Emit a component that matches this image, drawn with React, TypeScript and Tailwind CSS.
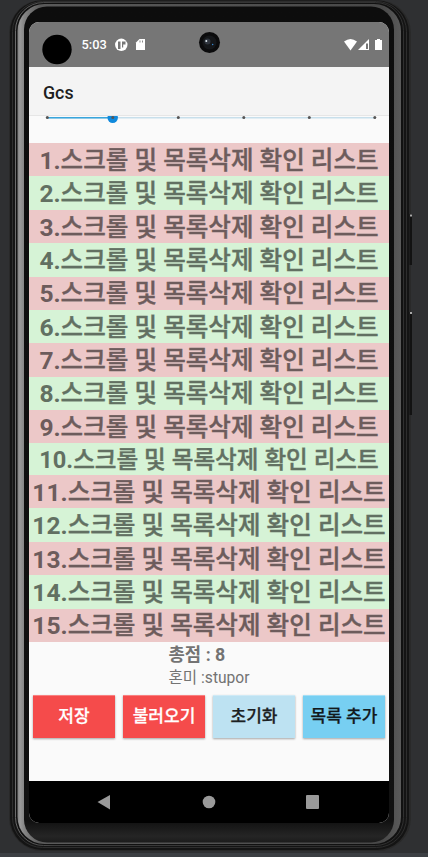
import React from "react";

const rows = Array.from({ length: 15 }, (_, i) => i + 1);
const ticks = [47, 112.5, 178, 243.5, 309, 374.5];

const buttons = [
  { label: "저장", style: "bg-[#f54b4b] text-white border-t-[#f98080]" },
  { label: "불러오기", style: "bg-[#f54b4b] text-white border-t-[#f98080]" },
  { label: "초기화", style: "bg-[#bde2f2] text-[#1c2123] border-t-[#cfeaf6]" },
  { label: "목록 추가", style: "bg-[#77cff2] text-[#12191c] border-t-[#a4dff6]" },
];

const PhoneFrame: React.FC = () => (
  <svg className="absolute inset-0" width="428" height="857" viewBox="0 0 428 857">
    <defs>
      <linearGradient id="metal" x1="17" x2="401" y1="0" y2="0" gradientUnits="userSpaceOnUse">
        <stop offset="0" stopColor="#7a7a7a" />
        <stop offset="0.008" stopColor="#9a9a9a" />
        <stop offset="0.018" stopColor="#868686" />
        <stop offset="0.06" stopColor="#5a5a5a" />
        <stop offset="0.95" stopColor="#484848" />
        <stop offset="1" stopColor="#5a5a5a" />
      </linearGradient>
      <linearGradient id="rim" x1="15" x2="405" y1="0" y2="0" gradientUnits="userSpaceOnUse">
        <stop offset="0" stopColor="#6a6a6a" />
        <stop offset="0.1" stopColor="#3c3c3c" />
        <stop offset="1" stopColor="#303030" />
      </linearGradient>
      <linearGradient id="bezel" x1="0" x2="0" y1="7" y2="842" gradientUnits="userSpaceOnUse">
        <stop offset="0" stopColor="#0d0d0d" />
        <stop offset="0.975" stopColor="#111" />
        <stop offset="0.993" stopColor="#252525" />
        <stop offset="1" stopColor="#1c1c1c" />
      </linearGradient>
    </defs>
    <rect y="853" width="428" height="4" fill="#3c3f43" />
    <rect x="9" y="108" width="5" height="8" fill="#3a3a3a" />
    <rect x="9" y="0" width="402" height="851" rx="33" fill="#292929" />
    <rect x="10" y="0.5" width="399" height="849.500" rx="32" fill="#141414" />
    <rect x="12.500" y="1.500" width="394" height="846" rx="30" fill="none" stroke="#2e2e2e" />
    <rect x="15.500" y="2.500" width="388" height="843" rx="28" fill="#111" stroke="url(#rim)" />
    <rect x="17.500" y="4" width="383.500" height="840" rx="27" fill="url(#metal)" />
    <rect x="24" y="6.500" width="370" height="836" rx="23" fill="url(#bezel)" />
    <path d="M409.500 214h2.500v51h-2.500zM409.500 312h2.500v103h-2.500z" fill="#121212" />
    <path d="M410 214.500h2v2h-2zM410 312h2v2h-2z" fill="#aaa" />
  </svg>
);

const StatusBar: React.FC = () => (
  <div className="relative h-[45px] shrink-0 bg-[#767676]">
    <svg className="absolute inset-0" width="360" height="45" viewBox="29 22 360 45">
      <circle cx="57" cy="49.5" r="14.7" fill="#000" />
      <circle cx="121.300" cy="44.800" r="6.200" fill="#fff" />
      <path d="M118 41.500h2.500v7.500h-2.500z" fill="#767676" />
      <path d="M122 41.500h3.500v3h-2.300v3h-1.200z" fill="#767676" />
      <path d="M139.500 39h5.500v11h-9v-7.500z" fill="#fff" />
      <path d="M139.500 40.500h1v2h-1zM142 40.500h1v2h-1z" fill="#888" />
      <circle cx="209.500" cy="42.500" r="10.500" fill="#0b0b0c" />
      <circle cx="209.500" cy="42.500" r="7" fill="#15171a" />
      <circle cx="207.500" cy="41.500" r="3" fill="#30353e" />
      <circle cx="206.300" cy="41" r="1" fill="#dce8ee" />
      <circle cx="212.700" cy="44.500" r="0.700" fill="#3a91e0" />
      <path d="M344 41.500q6.500-5 13 0l-6.500 9z" fill="#fff" />
      <path d="M358 50L369 39v11z" fill="#fff" />
      <path d="M366 43.500h2V49h-2z" fill="#767676" />
      <path d="M377 39h3v1h2v10h-7V40h2z" fill="#fff" />
    </svg>
    <span className="absolute left-[52.5px] top-[15px] text-[12.8px] leading-4 font-medium text-white">
      5:03
    </span>
  </div>
);

const App: React.FC = () => {
  return (
    <div className="relative h-[857px] w-[428px] overflow-hidden bg-[#2f3032] pl-[29px] pt-[22px] font-[Roboto,'Noto_Sans_CJK_KR',sans-serif]">
      <PhoneFrame />
      <div className="relative flex h-[801px] w-[360px] flex-col overflow-hidden rounded-[10px] bg-[#fafafa]">
        <StatusBar />
        <header className="flex h-[49px] shrink-0 items-center border-b border-[#e6e6e6] bg-[#f4f4f4] pl-[14px] pt-[4px] text-[17.8px] font-medium text-[#202020]">
          Gcs
        </header>
        <div className="h-[27px] shrink-0">
          <svg width="360" height="27" viewBox="29 116 360 27">
            <rect x="47" y="117" width="328" height="1.500" fill="#c8dfeb" />
            <rect x="47" y="117" width="65" height="1.500" fill="#39a5dc" />
            <circle cx="112.700" cy="117.700" r="5.200" fill="#1089dc" />
            {ticks.map((x) => (
              <circle key={x} cx={x + 0.3} cy="117.500" r="1.500" fill="#555" />
            ))}
          </svg>
        </div>
        <ul className="shrink-0">
          {rows.map((n) => (
            <li
              key={n}
              className={`flex items-center justify-center whitespace-pre pt-[3px] font-medium odd:bg-[#ecc8c8] odd:text-[#6d5c5c] even:bg-[#d6f3d6] even:text-[#627062] ${
                n === 10 ? "h-[31.7px] text-[23.6px]" : "h-[33.38px] text-[24.55px]"
              }`}
            >
              <b className="font-bold">{n}.</b>
              <span className="[-webkit-text-stroke:0.4px]">스크롤 및 목록삭제 확인 리스트</span>
            </li>
          ))}
        </ul>
        <div className="ml-[139.5px] shrink-0 text-[#737373]">
          <p className="h-6 pt-px text-[17.8px] leading-6 font-bold">총점 : 8</p>
          <p className="h-[23px] pt-px text-[15.6px] leading-[22px]">혼미 :stupor</p>
        </div>
        <div className="mt-[6px] flex shrink-0 gap-2 px-1">
          {buttons.map((b) => (
            <button
              key={b.label}
              className={`h-[43px] w-[82px] whitespace-nowrap border-t text-[17px] font-medium shadow-[0_1px_2px_rgba(0,0,0,0.35)] [-webkit-text-stroke:0.25px] ${b.style}`}
            >
              {b.label}
            </button>
          ))}
        </div>
        <nav className="mt-auto h-[42px] shrink-0 bg-black">
          <svg width="360" height="42" viewBox="29 781 360 42" fill="#9a9a9a">
            <path d="M110 795v14.500L97.500 802z" />
            <circle cx="209" cy="802" r="6.300" />
            <rect x="306" y="795" width="13" height="14" rx="1" />
          </svg>
        </nav>
      </div>
    </div>
  );
};

export default App;
